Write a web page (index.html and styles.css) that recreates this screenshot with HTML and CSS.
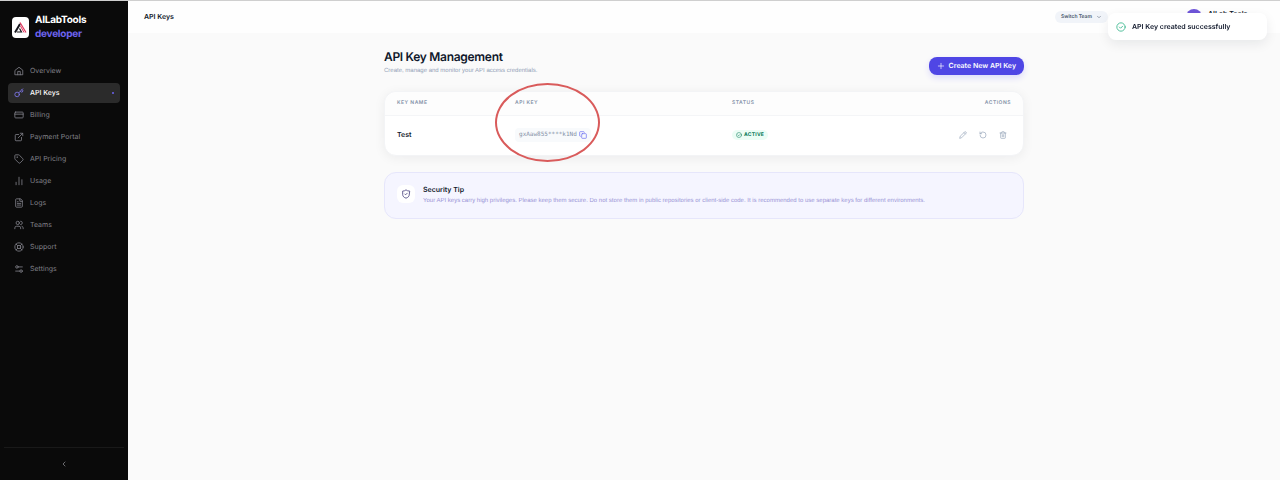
FILE: index.html
```html
<!DOCTYPE html>
<html lang="en">
    <head>
        <meta charset="utf-8" />
        <meta name="viewport" content="width=device-width, initial-scale=1" />
        <title>API Keys</title>
        <link rel="stylesheet" href="styles.css">
    </head>

    <body>
        <div class="app">
            <aside class="sidebar">
                <a class="brand" href="#">
                    <svg class="brand-logo" viewBox="0 0 17 21">
                        <rect width="17" height="21" rx="4" fill="#fff" />
                        <path d="M3 15.500L8 7" stroke="#16161d" stroke-width="2" />
                        <path d="M5 15h4.500L7.500 11.500" fill="none" stroke="#16161d" stroke-width="1.200" />
                        <path d="M8 5.500l6 10" stroke="#e0345c" stroke-width="1.200" />
                        <path d="M8.500 9l3.500 6.500" stroke="#e0345c" stroke-width="1" />
                    </svg>
                    <span class="brand-text">AILabTools<br /><span class="brand-sub">developer</span></span>
                </a>
                <nav class="menu">
                    <a class="menu-item" href="#">
                        <svg class="icon" viewBox="0 0 24 24"><path d="M3 10l9-7 9 7v11H3z" /><path d="M9 21v-8h6v8" /></svg>
                        Overview
                    </a>
                    <a class="menu-item active" href="#">
                        <svg class="icon" viewBox="0 0 24 24"><circle cx="7.500" cy="15.500" r="5.500" /><path d="M11.500 11.500L21 2M15.500 7.500l3 3L22 7l-3-3" /></svg>
                        API Keys
                        <span class="dot"></span>
                    </a>
                    <a class="menu-item" href="#">
                        <svg class="icon" viewBox="0 0 24 24"><rect x="2" y="5" width="20" height="14" rx="2" /><path d="M2 10h20" /></svg>
                        Billing
                    </a>
                    <a class="menu-item" href="#">
                        <svg class="icon" viewBox="0 0 24 24"><path d="M15 3h6v6M10 14L21 3M18 13v6a2 2 0 0 1-2 2H5a2 2 0 0 1-2-2V8a2 2 0 0 1 2-2h6" /></svg>
                        Payment Portal
                    </a>
                    <a class="menu-item" href="#">
                        <svg class="icon" viewBox="0 0 24 24"><path d="M12.600 2.600A2 2 0 0 0 11.200 2H4a2 2 0 0 0-2 2v7.200a2 2 0 0 0 .6 1.400l8.700 8.700a2.400 2.400 0 0 0 3.400 0l6.600-6.600a2.400 2.400 0 0 0 0-3.400z" /><circle cx="7.500" cy="7.500" r=".5" /></svg>
                        API Pricing
                    </a>
                    <a class="menu-item" href="#">
                        <svg class="icon" viewBox="0 0 24 24"><path d="M5 21v-6M12 21V3M19 21V9" /></svg>
                        Usage
                    </a>
                    <a class="menu-item" href="#">
                        <svg class="icon" viewBox="0 0 24 24"><path d="M15 2H6a2 2 0 0 0-2 2v16a2 2 0 0 0 2 2h12a2 2 0 0 0 2-2V7zM14 2v6h6M8 9h2M8 13h8M8 17h8" /></svg>
                        Logs
                    </a>
                    <a class="menu-item" href="#">
                        <svg class="icon" viewBox="0 0 24 24"><circle cx="9" cy="7" r="4" /><path d="M2 21v-2a4 4 0 0 1 4-4h6a4 4 0 0 1 4 4v2M16 3a4 4 0 0 1 0 8M22 21v-2a4 4 0 0 0-3-4" /></svg>
                        Teams
                    </a>
                    <a class="menu-item" href="#">
                        <svg class="icon" viewBox="0 0 24 24"><circle cx="12" cy="12" r="10" /><circle cx="12" cy="12" r="4" /><path d="M5 5l4 4M15 9l4-4M15 15l4 4M9 15l-4 4" /></svg>
                        Support
                    </a>
                    <a class="menu-item" href="#">
                        <svg class="icon" viewBox="0 0 24 24"><path d="M20 7h-9M14 17H4" /><circle cx="17" cy="17" r="3" /><circle cx="7" cy="7" r="3" /></svg>
                        Settings
                    </a>
                </nav>
                <div class="sidebar-foot">
                    <button class="collapse" type="button" aria-label="Collapse sidebar">
                        <svg class="icon-small" viewBox="0 0 24 24"><path d="M15 18l-6-6 6-6" /></svg>
                    </button>
                </div>
            </aside>

            <div class="page">
                <header class="topbar">
                    <h2 class="topbar-title">API Keys</h2>
                    <div class="topbar-right">
                        <button class="team" type="button">
                            Switch Team
                            <svg class="icon-small" viewBox="0 0 24 24"><path d="M6 9l6 6 6-6" /></svg>
                        </button>
                        <div class="user">
                            <span class="avatar"></span>
                            <span class="user-name">AILab Tools</span>
                        </div>
                    </div>
                </header>

                <main class="content">
                    <div class="heading">
                        <div>
                            <h1>API Key Management</h1>
                            <p>Create, manage and monitor your API access credentials.</p>
                        </div>
                        <button class="create" type="button">
                            <svg class="icon-small" viewBox="0 0 24 24"><path d="M4 12h16M12 4v16" /></svg>
                            Create New API Key
                        </button>
                    </div>

                    <div class="card">
                        <table class="keys">
                            <thead>
                                <tr>
                                    <th class="col-name">Key Name</th>
                                    <th class="col-key">API Key</th>
                                    <th class="col-status">Status</th>
                                    <th class="col-actions">Actions</th>
                                </tr>
                            </thead>
                            <tbody>
                                <tr>
                                    <td class="key-name">Test</td>
                                    <td>
                                        <div class="key-wrap">
                                            <code class="key">gxAaw855****k1Nd</code>
                                            <button class="copy" type="button" aria-label="Copy key">
                                                <svg class="icon-small" viewBox="0 0 24 24"><rect x="8" y="8" width="14" height="14" rx="2" /><path d="M4 16a2 2 0 0 1-2-2V4a2 2 0 0 1 2-2h10a2 2 0 0 1 2 2" /></svg>
                                            </button>
                                            <span class="marker"></span>
                                        </div>
                                    </td>
                                    <td>
                                        <span class="status">
                                            <svg class="icon-small" viewBox="0 0 24 24"><circle cx="12" cy="12" r="10" /><path d="M8 12l3 3 5-5" /></svg>
                                            Active
                                        </span>
                                    </td>
                                    <td>
                                        <div class="actions">
                                            <button type="button" aria-label="Edit">
                                                <svg class="icon-small" viewBox="0 0 24 24"><path d="M17 3a2.800 2.800 0 0 1 4 4L7.500 20.500 2 22l1.500-5.500zM15 5l4 4" /></svg>
                                            </button>
                                            <button type="button" aria-label="Reset">
                                                <svg class="icon-small" viewBox="0 0 24 24"><path d="M3 12a9 9 0 1 0 9-9 9.800 9.800 0 0 0-6.700 2.700L3 8M3 3v5h5" /></svg>
                                            </button>
                                            <button type="button" aria-label="Delete">
                                                <svg class="icon-small" viewBox="0 0 24 24"><path d="M3 6h18M19 6v14a2 2 0 0 1-2 2H7a2 2 0 0 1-2-2V6M8 6V4a2 2 0 0 1 2-2h4a2 2 0 0 1 2 2v2M10 11v6M14 11v6" /></svg>
                                            </button>
                                        </div>
                                    </td>
                                </tr>
                            </tbody>
                        </table>
                    </div>

                    <section class="tip">
                        <span class="tip-icon">
                            <svg class="icon" viewBox="0 0 24 24"><path d="M20 13c0 5-3.500 7.500-8 9-4.500-1.500-8-4-8-9V5c3 0 6-1 8-3 2 2 5 3 8 3zM9 12l2 2 4-4" /></svg>
                        </span>
                        <div>
                            <h3>Security Tip</h3>
                            <p>Your API keys carry high privileges. Please keep them secure. Do not store them in public repositories or client-side code. It is recommended to use separate keys for different environments.</p>
                        </div>
                    </section>
                </main>
            </div>
        </div>

        <div class="toast" role="status">
            <svg class="icon" viewBox="0 0 24 24"><circle cx="12" cy="12" r="10" /><path d="M8 12l3 3 5-5" /></svg>
            API Key created successfully
        </div>
    </body>
</html>
```
FILE: styles.css
```css
* {
    box-sizing: border-box;
}
body {
    margin: 0;
    background: #fafafa;
    color: #0f172a;
    font-family: Inter, "Liberation Sans", sans-serif;
    font-size: 7px;
    line-height: 10px;
    text-rendering: geometricPrecision;
}
h1,
h2,
h3,
p {
    margin: 0;
}
a {
    color: inherit;
    text-decoration: none;
}
button {
    display: inline-flex;
    align-items: center;
    padding: 0;
    border: 0;
    background: none;
    color: inherit;
    font: inherit;
    text-rendering: inherit;
}
.icon,
.icon-small {
    flex: none;
    width: 10px;
    height: 10px;
    fill: none;
    stroke: currentColor;
    stroke-width: 2;
    stroke-linecap: round;
    stroke-linejoin: round;
}
.icon-small {
    width: 8px;
    height: 8px;
}
.app {
    display: flex;
    min-height: 100vh;
    border-top: 1px solid #cfcfcf;
}

/* sidebar */
.sidebar {
    display: flex;
    flex-direction: column;
    flex: none;
    width: 128px;
    background: #0a0a0a;
    color: #808088;
}
.brand {
    display: flex;
    align-items: center;
    gap: 6px;
    padding: 12px 12px 0;
}
.brand-logo {
    width: 17px;
    height: 21px;
}
.brand-text {
    color: #fff;
    font-size: 10px;
    font-weight: 700;
    line-height: 14px;
    letter-spacing: -0.025em;
}
.brand-sub {
    color: #6d63ee;
}
.menu {
    display: flex;
    flex-direction: column;
    gap: 2px;
    padding: 20px 8px 0;
}
.menu-item {
    display: flex;
    align-items: center;
    gap: 6px;
    height: 20px;
    padding: 0 6px;
    border-radius: 4px;
}
.menu-item.active {
    background: #2b2b2b;
    color: #fff;
    font-weight: 500;
}
.menu-item.active .icon {
    color: #8078ee;
}
.dot {
    width: 2px;
    height: 2px;
    margin-left: auto;
    border-radius: 50%;
    background: #6d63f0;
}
.sidebar-foot {
    display: flex;
    justify-content: center;
    margin: auto 4px 0;
    padding: 10px 0;
    border-top: 1px solid #191919;
}
.collapse {
    justify-content: center;
    width: 12px;
    height: 12px;
    color: #9a9aa0;
}

/* top bar */
.page {
    flex: 1;
    min-width: 0;
}
.topbar {
    display: flex;
    align-items: center;
    justify-content: space-between;
    height: 32px;
    padding: 0 16px;
    background: #fefefe;
}
.topbar-title {
    font-size: 7px;
    font-weight: 600;
}
.topbar-right {
    display: flex;
    align-items: center;
    gap: 78px;
}
.team {
    gap: 4px;
    height: 12px;
    padding: 0 6px;
    border-radius: 6px;
    background: #f1f4f9;
    color: #475569;
    font-size: 5px;
    font-weight: 600;
}
.team .icon-small {
    width: 6px;
    height: 6px;
}
.user {
    display: flex;
    gap: 6px;
    width: 78px;
    height: 16px;
}
.avatar {
    width: 16px;
    height: 16px;
    border-radius: 50%;
    background: #6f55d9;
}
.user-name {
    font-weight: 600;
}

/* content */
.content {
    max-width: 640px;
    margin: 0 auto;
    padding: 16px 0;
}
.heading {
    display: flex;
    align-items: flex-end;
    justify-content: space-between;
    margin-bottom: 16px;
}
.heading h1 {
    font-size: 12px;
    font-weight: 600;
    line-height: 16px;
    letter-spacing: -0.025em;
}
.heading p {
    margin-top: 2px;
    color: #94a3b8;
    font-family: "Liberation Sans", sans-serif;
    font-size: 6px;
    line-height: 8px;
}
.create {
    gap: 4px;
    height: 18px;
    padding: 0 8px;
    border-radius: 8px;
    background: #4f46e5;
    box-shadow: 0 3px 6px #dcdafa;
    color: #fff;
    font-weight: 600;
}
.card {
    border: 1px solid #f3f4f6;
    border-radius: 12px;
    background: #fff;
    box-shadow: 0 2px 12px rgba(15, 23, 42, 0.06);
}
.keys {
    width: 100%;
    border-collapse: collapse;
    table-layout: fixed;
}
.keys th,
.keys td {
    padding: 0 12px;
    text-align: left;
}
.keys th {
    height: 23px;
    border-bottom: 1px solid #f4f5f7;
    background: #fdfdfd;
    color: #8492a8;
    font-size: 5px;
    font-weight: 600;
    letter-spacing: 0.1em;
    text-transform: uppercase;
}
.keys th:first-child {
    border-top-left-radius: 12px;
}
.keys th:last-child {
    border-top-right-radius: 12px;
}
.keys td {
    height: 40px;
}
.col-name {
    width: 18.5%;
}
.col-key {
    width: 34%;
}
.keys .col-actions {
    text-align: right;
}
.key-name {
    font-weight: 600;
}
.key-wrap {
    position: relative;
    display: inline-flex;
    align-items: center;
    gap: 2px;
    height: 14px;
    padding: 0 4px;
    border-radius: 4px;
    background: #f8fafc;
    vertical-align: middle;
}
.key {
    color: #8390a6;
    font-family: "DejaVu Sans Mono", "Liberation Mono", monospace;
    font-size: 6px;
}
.copy {
    color: #6366f1;
}
/* hand-drawn style ring round the key */
.marker {
    position: absolute;
    top: -45px;
    left: -20px;
    width: 105px;
    height: 79px;
    border: 2px solid #d95b5b;
    border-radius: 50%;
    pointer-events: none;
}
.status {
    display: inline-flex;
    align-items: center;
    gap: 2px;
    padding: 0 4px;
    border-radius: 6px;
    background: #ecfdf5;
    color: #047857;
    font-size: 5px;
    font-weight: 700;
    letter-spacing: 0.05em;
    text-transform: uppercase;
    vertical-align: middle;
}
.status .icon-small {
    width: 6px;
    height: 6px;
}
.actions {
    display: flex;
    justify-content: flex-end;
    gap: 12px;
    padding-right: 4px;
    color: #94a3b8;
}
.tip {
    display: flex;
    gap: 8px;
    margin-top: 16px;
    padding: 12px;
    border: 1px solid #e6e6fb;
    border-radius: 12px;
    background: #f5f5ff;
}
.tip-icon {
    display: flex;
    align-items: center;
    justify-content: center;
    flex: none;
    width: 18px;
    height: 18px;
    border-radius: 6px;
    background: #fff;
    color: #4a437f;
}
.tip h3 {
    font-size: 7px;
    font-weight: 600;
}
.tip p {
    margin-top: 1px;
    color: #9a94d6;
    font-family: "Liberation Sans", sans-serif;
    font-size: 6px;
}

.toast {
    position: fixed;
    top: 13px;
    right: 13px;
    display: flex;
    align-items: center;
    gap: 6px;
    width: 159px;
    height: 27px;
    padding: 0 8px;
    border-radius: 8px;
    background: #fff;
    box-shadow: 0 4px 12px rgba(15, 23, 42, 0.08);
    font-weight: 600;
}
.toast .icon {
    color: #34b58a;
}
```
